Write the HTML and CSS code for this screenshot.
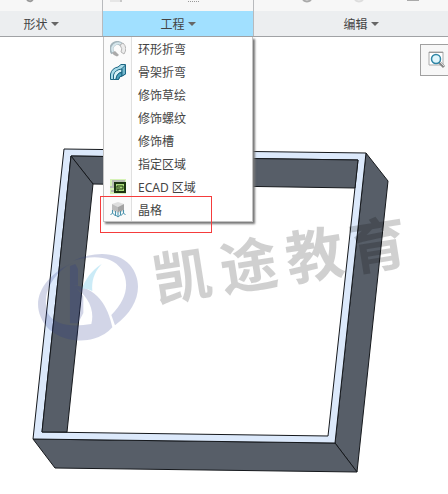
FILE: index.html
```html
<!DOCTYPE html>
<html lang="zh-CN">
<head>
    <meta charset="UTF-8">
    <meta name="viewport" content="width=device-width, initial-scale=1.0">
    <title>工程</title>
    <link rel="stylesheet" href="styles.css">
</head>
<body>
    <!-- Ribbon -->
    <header class="ribbon">
        <section class="group group-shape">
            <div class="tools">
                <svg width="102" height="11" fill="none" stroke="#999" stroke-width="2"><path d="M27 0q4 3 6 -1"/></svg>
            </div>
            <button class="group-label" type="button">形状<span class="arrow"></span></button>
        </section>
        <section class="group group-engineering">
            <div class="tools">
                <svg width="150" height="11" fill="none">
                    <path d="M7 0h12v2h-12z" fill="#e6e6e6"/>
                    <path d="M18 0v2" stroke="#aaa"/>
                    <path d="M85 1.500h12" stroke="#999" stroke-dasharray="1 1"/>
                </svg>
            </div>
            <button class="group-label active" type="button" aria-expanded="true">工程<span class="arrow"></span></button>

            <!-- Open menu -->
            <div class="menu">
                <button class="menu-item" type="button">
                    <span class="icon">
                        <svg width="16" height="16" viewBox="0 0 16 16">
                            <path d="M3 12A6 6 0 0 1 4 3 6 6 0 0 1 12 4" fill="none" stroke="#a3b4bb" stroke-width="4"/>
                            <path d="M3 11A6 6 0 0 1 4 4 6 6 0 0 1 11 3" fill="none" stroke="#d5e6ec" stroke-width="2"/>
                            <path d="M10 4l3-2q5 5 1 11l-3-2q2-3-1-7z" fill="#ececec" stroke="#b5b5b5"/>
                            <path d="M2 12l3-2 4 4-2 1.500Q4 15 2 12z" fill="#aaa"/>
                        </svg>
                    </span>
                    <span class="text">环形折弯</span>
                </button>
                <button class="menu-item" type="button">
                    <span class="icon">
                        <svg width="16" height="16" viewBox="0 0 16 16" stroke="#1d6683" stroke-linejoin="round">
                            <path d="M.5 15.500V10Q2 4 8 3L11 .5h4.500V10L12 12q-3 0-3.500 3.500z" fill="#a9dbe9"/>
                            <path d="M3.500 15.500V11Q5 5.500 12 5v3Q6.500 9 6 15.500z" fill="#d8f1f7"/>
                            <path d="M6 15.500Q6.500 9 12 8.500V12q-3 0-3.500 3.500z" fill="#4ca2bd"/>
                            <path d="M12 4.500L15.500 1v9L12 12z" fill="#73b7cc"/>
                        </svg>
                    </span>
                    <span class="text">骨架折弯</span>
                </button>
                <button class="menu-item" type="button"><span class="icon"></span><span class="text">修饰草绘</span></button>
                <button class="menu-item" type="button"><span class="icon"></span><span class="text">修饰螺纹</span></button>
                <button class="menu-item" type="button"><span class="icon"></span><span class="text">修饰槽</span></button>
                <button class="menu-item" type="button"><span class="icon"></span><span class="text">指定区域</span></button>
                <button class="menu-item" type="button">
                    <span class="icon">
                        <svg width="16" height="16" viewBox="0 0 16 16">
                            <path d="M0 0h16v15H0z" fill="#d5f2b5"/>
                            <path d="M15 2H3v6H0M1 12h3" fill="none" stroke="#b8beb4" stroke-width="2"/>
                            <path d="M5 4h10v9H5z" fill="#a8da78" stroke="#1c3511" stroke-width="2"/>
                            <path d="M7 7h6v3h-3" fill="none" stroke="#1c3511"/>
                            <path d="M7 7v4h2V8" fill="none" stroke="#1c3511"/>
                        </svg>
                    </span>
                    <span class="text">ECAD 区域</span>
                </button>
                <button class="menu-item" type="button">
                    <span class="icon">
                        <svg width="16" height="16" viewBox="0 0 16 16">
                            <path d="M2 2L8 0l6 2-6 3z" fill="#dedede"/>
                            <path d="M2 2l6 3v6L2 9z" fill="#bcbcbc"/>
                            <path d="M14 2L8 5v6l6-2z" fill="#a3a3a3"/>
                            <path d="M2.500 8v4M5.500 9v4M8 10v4M10.500 9v4M13.500 8v4" stroke="#e8f6fa" stroke-width="2"/>
                            <path d="M2.500 8v3l-2 2M2.500 11l3 3V9M5.500 13L8 15l2.500-2V9M8 10v5M10.500 14l3-3V8M13.500 11l2 2" fill="none" stroke="#4a91ab"/>
                        </svg>
                    </span>
                    <span class="text">晶格</span>
                </button>
                <div class="highlight"></div>
            </div>
        </section>
        <section class="group group-edit">
            <div class="tools">
                <svg width="180" height="11" fill="none">
                    <path d="M49 0q4 3 8 0" stroke="#aaa" stroke-width="2"/>
                    <path d="M101 0q4 3 8 0" stroke="#ddd" stroke-width="2"/>
                    <path d="M153 .5h12" stroke="#aaa"/>
                </svg>
            </div>
            <button class="group-label" type="button">编辑<span class="arrow"></span></button>
        </section>
    </header>

    <!-- Model view -->
    <main class="viewport">
        <svg class="model" viewBox="0 37 448 450">
            <g stroke="#15181c" stroke-linejoin="round">
                <path class="wall" d="M366 153L388 181L357 472L335 443z"/>
                <path class="wall" d="M33 439L335 443L357 472L55 468z"/>
                <path class="rim" fill-rule="evenodd" d="M64 149L366 153L335 443L33 439zM71 156L42 432L328 436L358 160z"/>
                <path class="wall" d="M71 156L358 160L355 188L93 184z"/>
                <path class="wall" d="M71 156L93 184L67 432L42 432z"/>
            </g>

            <!-- Watermark -->
            <g class="mark" transform="translate(30 240) scale(.3333)">
                <path d="M130 62C190 35 260 32 300 75C345 130 325 205 255 256L244 225C290 180 300 130 275 88C245 45 185 45 130 62z"/>
                <path d="M130 68C50 100 5 170 32 230C58 298 145 310 190 296Q225 288 247 262C235 200 200 140 125 135C175 165 195 210 184 252C125 262 75 255 55 222C35 175 55 120 110 78z"/>
                <path d="M120 78l16-6 8 15v50l-12-2 28 34v50l-16 31h-24z"/>
                <path class="mark-tip" d="M215 72C190 100 185 125 187 153Q170 143 156 146C165 120 185 90 215 72z"/>
            </g>
            <text class="mark-text" transform="translate(157 302) rotate(-9)" x="0 67 134 198" y="0">凯途教育</text>
        </svg>

        <button class="view-button" type="button" aria-label="重新调整">
            <svg width="18" height="18" viewBox="0 0 18 18" fill="none">
                <path d="M1 1h14v13H1z" fill="#fff" stroke="#aaa"/>
                <path d="M1 1.500h14" stroke="#999"/>
                <path d="M11 11l5 5" stroke="#888" stroke-width="3"/>
                <path d="M12 11l4 4" stroke="#ddd"/>
                <circle cx="8" cy="8" r="4.500" fill="#e0f6fc" stroke="#2f86a6" stroke-width="1.500"/>
            </svg>
        </button>
    </main>
</body>
</html>
```
FILE: styles.css
```css
* {
    margin: 0;
    padding: 0;
    box-sizing: border-box;
}

body {
    font-family: "Noto Sans", "Noto Sans CJK SC", sans-serif;
    font-size: 12px;
    background-color: #fff;
    color: #444;
}

button {
    font: inherit;
    color: inherit;
    border: none;
    background: none;
}

svg {
    display: block;
    flex-shrink: 0;
}

/* Ribbon */
.ribbon {
    display: grid;
    grid-template-columns: 103px 151px 1fr;
    border-bottom: 1px solid #a0a2a5;
}

.group {
    position: relative;
    min-width: 0;
    border-right: 1px solid #b8babd;
}

.group-edit {
    border-right: none;
}

.tools {
    height: 11px;
    overflow: hidden;
    background-color: #f7f7f7;
}

.group-label {
    display: flex;
    align-items: center;
    justify-content: center;
    gap: 3px;
    width: 100%;
    height: 25px;
    background-color: #eceef0;
}

.group-label.active {
    background-color: #a1e0ff;
}

.group-shape .group-label {
    padding-right: 20px;
}

.group-edit .group-label {
    padding-left: 20px;
}

.arrow {
    border: 4px solid transparent;
    border-top-color: #666;
    border-bottom: none;
}

/* Dropdown menu */
.menu {
    position: absolute;
    top: 100%;
    left: 0;
    z-index: 2;
    width: 100%;
    margin-top: 1px;
    background-color: #fff;
    border: 1px solid #c3c3c3;
    border-top: none;
    box-shadow: 2px 2px 2px #777;
}

.menu-item {
    display: flex;
    align-items: center;
    width: 100%;
    height: 23px;
    text-align: left;
}

.icon {
    display: flex;
    align-items: center;
    justify-content: center;
    width: 28px;
    height: 23px;
    background-color: #fbfbfb;
    border-right: 1px solid #e0e0e0;
}

.text {
    padding-left: 6px;
}

.highlight {
    position: absolute;
    right: 40px;
    bottom: -12px;
    left: -4px;
    height: 37px;
    border: 1px solid #f53c3c;
}

/* Model view */
.viewport {
    position: relative;
}

.model {
    width: 100%;
    height: auto;
}

.wall {
    fill: #575e68;
}

.rim {
    fill: #dce9fb;
}

.mark {
    fill: #22348c;
    opacity: 0.2;
}

.mark-tip {
    fill: #00a0dc;
}

.mark-text {
    font-family: "Noto Sans CJK SC", sans-serif;
    font-size: 58px;
    font-weight: bold;
    fill: #000;
    opacity: 0.18;
}

.view-button {
    position: absolute;
    top: 7px;
    right: 0;
    width: 28px;
    height: 32px;
    padding-left: 7px;
    background-color: #f7f7f7;
    border: 1px solid #a0a0a0;
    border-right: none;
}
```
